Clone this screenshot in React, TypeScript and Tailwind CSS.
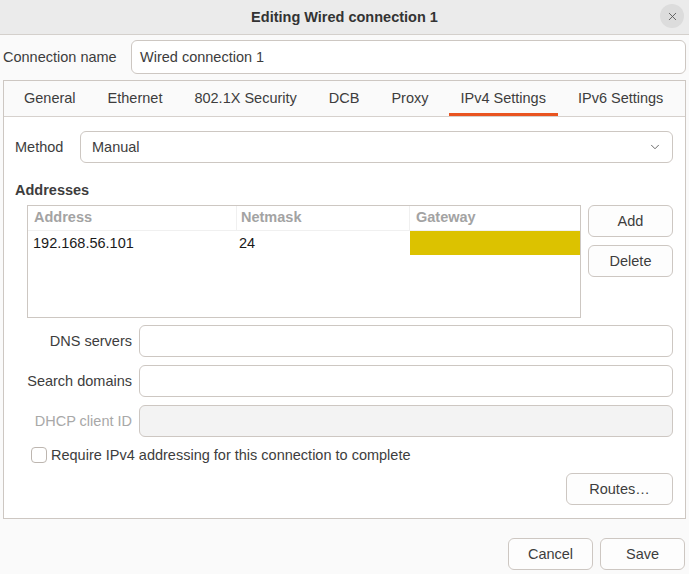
import { ChevronDown, X } from "lucide-react";

const tabs = ["General", "Ethernet", "802.1X Security", "DCB", "Proxy", "IPv4 Settings", "IPv6 Settings"];

function Entry({ disabled = false }: { disabled?: boolean }) {
  return (
    <div
      className={`h-[32px] flex-1 rounded-[6px] border border-[#cdc7c2] ${
        disabled ? "bg-[#f3f3f3]" : "bg-white"
      }`}
    />
  );
}

function Button({ label, className = "" }: { label: string; className?: string }) {
  return (
    <button
      className={`h-[32px] pt-[2px] rounded-[6px] border border-[#cdc7c2] bg-[#fdfdfd] text-[#3d3d3d] ${className}`}
    >
      {label}
    </button>
  );
}

export default function App() {
  return (
    <div className="w-[689px] h-[574px] bg-[#fafafa] flex flex-col text-[14.5px] text-[#3d3d3d] font-['Liberation_Sans',sans-serif] overflow-hidden">
      {/* header bar */}
      <div className="relative h-[35px] shrink-0 bg-[#ebebeb] border-b border-[#d4d0cc] flex items-center justify-center">
        <span className="pt-[2px] font-bold text-[#333]">Editing Wired connection 1</span>
        <button className="absolute right-[5px] top-[4px] w-[24px] h-[24px] rounded-full bg-[#dcdcdc] flex items-center justify-center">
          <X size={13} strokeWidth={1.6} className="text-[#555]" />
        </button>
      </div>

      <div className="px-[3px] flex flex-col">
        <div className="mt-[5px] flex items-center">
          <span className="w-[128px] pt-[2px]">Connection name</span>
          <div className="h-[34px] flex-1 rounded-[6px] border border-[#cdc7c2] bg-white flex items-center px-[8px] pt-[2px]">
            Wired connection 1
          </div>
        </div>

        {/* notebook */}
        <div className="mt-[6px] h-[439px] border border-[#cdc7c2] bg-white flex flex-col">
          <div className="h-[36px] shrink-0 bg-[#fafafa] border-b border-[#d6d1cd] flex items-stretch pl-[8px] gap-[8px]">
            {tabs.map((t) => (
              <div
                key={t}
                className={`px-[12px] flex items-center border-b-[3px] ${
                  t === "IPv4 Settings" ? "border-[#e95420]" : "border-transparent"
                }`}
              >
                <span className="mt-[4px]">{t}</span>
              </div>
            ))}
          </div>

          <div className="flex-1 flex flex-col pt-[14px] pl-[11px] pr-[12px]">
            <div className="flex items-center">
              <span className="w-[65px] pt-[2px]">Method</span>
              <div className="h-[32px] flex-1 rounded-[6px] border border-[#cdc7c2] bg-white flex items-center justify-between pl-[11px] pr-[10px]">
                <span className="pt-[2px]">Manual</span>
                <ChevronDown size={14} strokeWidth={1.5} className="text-[#555]" />
              </div>
            </div>

            <div className="mt-[16px] pt-[1px] font-bold">Addresses</div>

            <div className="mt-[3px] ml-[12px] flex gap-[7px]">
              <div className="w-[554px] h-[113px] border border-[#cdc7c2] bg-white">
                <div className="h-[25px] grid grid-cols-[209px_173px_1fr] border-b border-[#f0f0f0] font-bold text-[#a3a3a3]">
                  <div className="pl-[6px] pt-[1px] flex items-center border-r border-[#f0f0f0]">Address</div>
                  <div className="pl-[4px] pt-[1px] flex items-center border-r border-[#f0f0f0]">Netmask</div>
                  <div className="pl-[6px] pt-[1px] flex items-center">Gateway</div>
                </div>
                <div className="h-[23px] grid grid-cols-[209px_173px_1fr] text-[#1a1a1a]">
                  <div className="pl-[5px] pt-[2px] flex items-center">192.168.56.101</div>
                  <div className="pl-[2px] pt-[2px] flex items-center">24</div>
                  <div className="bg-[#dcc200]" />
                </div>
              </div>
              <div className="w-[85px] flex flex-col gap-[8px]">
                <Button label="Add" />
                <Button label="Delete" />
              </div>
            </div>

            <div className="mt-[7px] flex flex-col gap-[8px]">
              <div className="flex items-center gap-[7px]">
                <span className="w-[117px] pt-[2px] text-right">DNS servers</span>
                <Entry />
              </div>
              <div className="flex items-center gap-[7px]">
                <span className="w-[117px] pt-[2px] text-right">Search domains</span>
                <Entry />
              </div>
              <div className="flex items-center gap-[7px]">
                <span className="w-[117px] pt-[2px] text-right text-[#a8a8a8]">DHCP client ID</span>
                <Entry disabled />
              </div>
            </div>

            <div className="mt-[6px] ml-[16px] flex items-center gap-[4px]">
              <div className="w-[16px] h-[16px] rounded-[4px] border border-[#bdb6b0] bg-white" />
              <span className="pt-[2px]">Require IPv4 addressing for this connection to complete</span>
            </div>

            <div className="mt-[6px] flex justify-end">
              <Button label="Routes…" className="w-[107px]" />
            </div>
          </div>
        </div>
      </div>

      <div className="mt-[19px] flex justify-end gap-[7px] pr-[4px]">
        <Button label="Cancel" className="w-[85px]" />
        <Button label="Save" className="w-[85px]" />
      </div>
    </div>
  );
}
